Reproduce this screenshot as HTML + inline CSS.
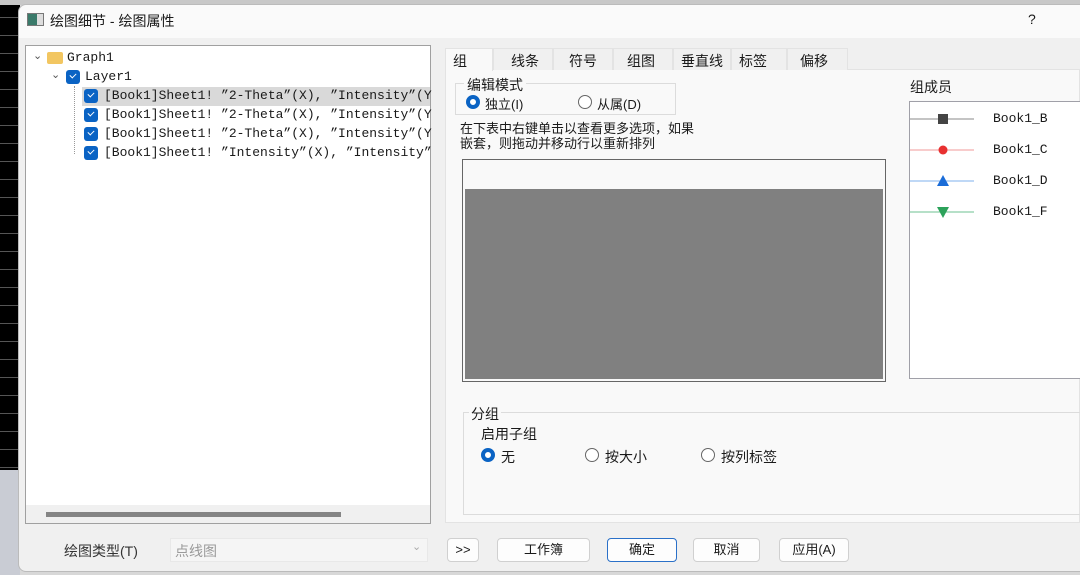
<!DOCTYPE html>
<html><head><meta charset="utf-8"><style>
*{margin:0;padding:0;box-sizing:border-box}
body{width:1080px;height:575px;overflow:hidden;position:relative;background:#d8d8d8;font-family:"Liberation Sans","Noto Sans CJK SC",sans-serif;font-size:13px;color:#1a1a1a}
.a{position:absolute}
.mono{font-family:"Liberation Mono","Noto Sans CJK SC",monospace;font-size:13px;white-space:nowrap}
.cb{position:absolute;width:14px;height:14px;border-radius:3px;background:#0a63c4}
.cb:after{content:"";position:absolute;left:4px;top:3px;width:5px;height:3px;border-left:1.5px solid #fff;border-bottom:1.5px solid #fff;transform:rotate(-45deg)}
.tab{position:absolute;top:48px;height:22px;background:#f0f0f0;border:1px solid #e3e3e3;border-bottom:none;padding:2px 0 0 7px;font-size:14px}
.rad{position:absolute;width:14px;height:14px;border-radius:50%;border:1px solid #666;background:#fff}
.rad.on{border:4px solid #0a63c4}
.btn{position:absolute;top:538px;height:24px;background:#fdfdfd;border:1px solid #d0d0d0;border-radius:4px;text-align:center;line-height:22px;font-size:13px}
.t{white-space:nowrap}
</style></head><body>
<div class="a" style="left:0;top:0;width:20px;height:470px;background:#000;background-image:repeating-linear-gradient(#000 0 17px,#555 17px 18px)"></div>
<div class="a" style="left:0;top:0;width:1080px;height:5px;background:#c8c8c8"></div>
<div class="a" style="left:0;top:470px;width:20px;height:105px;background:#c9ccd4"></div>
<div class="a" style="left:18px;top:4px;width:1070px;height:568px;background:#f0f0f0;border-radius:8px;border:1px solid #bbb"></div>
<div class="a" style="left:19px;top:5px;width:1061px;height:33px;background:#fafafa;border-radius:8px 0 0 0"></div>
<div class="a" style="left:27px;top:13px;width:17px;height:13px;border:1px solid #777;background:linear-gradient(90deg,#3a7a6a 0 60%,#ddd 60%)"></div>
<div class="a t" style="left:50px;top:11px;font-size:14px">绘图细节 - 绘图属性</div>
<div class="a t" style="left:1028px;top:11px;font-size:14px">?</div>
<div class="a" style="left:25px;top:45px;width:406px;height:479px;background:#fff;border:1px solid #a0a0a0"></div>
<div class="a" style="left:26px;top:505px;width:404px;height:18px;background:#f0f0f0"></div>
<div class="a" style="left:46px;top:512px;width:295px;height:5px;background:#858585"></div>
<div class="a t" style="left:33px;top:49px;font-size:11px;color:#555">⌄</div>
<div class="a" style="left:47px;top:52px;width:16px;height:12px;background:#f2c661;border-radius:2px"></div>
<div class="a mono" style="left:67px;top:50px">Graph1</div>
<div class="a t" style="left:51px;top:68px;font-size:11px;color:#555">⌄</div>
<div class="cb" style="left:66px;top:70px"></div>
<div class="a mono" style="left:85px;top:69px">Layer1</div>
<div class="a" style="left:74px;top:86px;width:1px;height:68px;border-left:1px dotted #999"></div>
<div class="a" style="left:82px;top:87px;width:348px;height:19px;background:#d9d9d9"></div>
<div class="cb" style="left:84px;top:89px"></div>
<div class="a mono" style="left:104px;top:88px">[Book1]Sheet1! ”2-Theta”(X), ”Intensity”(Y</div>
<div class="cb" style="left:84px;top:108px"></div>
<div class="a mono" style="left:104px;top:107px">[Book1]Sheet1! ”2-Theta”(X), ”Intensity”(Y</div>
<div class="cb" style="left:84px;top:127px"></div>
<div class="a mono" style="left:104px;top:126px">[Book1]Sheet1! ”2-Theta”(X), ”Intensity”(Y</div>
<div class="cb" style="left:84px;top:146px"></div>
<div class="a mono" style="left:104px;top:145px">[Book1]Sheet1! ”Intensity”(X), ”Intensity”</div>
<div class="a" style="left:445px;top:69px;width:635px;height:454px;background:#f9f9f9;border:1px solid #e3e3e3"></div>
<div class="tab" style="left:445px;width:48px;height:23px;background:#f9f9f9">组</div>
<div class="tab" style="left:493px;width:60px;padding-left:17px">线条</div>
<div class="tab" style="left:553px;width:60px;padding-left:15px">符号</div>
<div class="tab" style="left:613px;width:60px;padding-left:13px">组图</div>
<div class="tab" style="left:673px;width:58px">垂直线</div>
<div class="tab" style="left:731px;width:56px">标签</div>
<div class="tab" style="left:787px;width:61px;padding-left:12px">偏移</div>
<div class="a" style="left:455px;top:83px;width:221px;height:32px;border:1px solid #dcdcdc"></div>
<div class="a t" style="left:464px;top:75px;background:#f9f9f9;padding:0 3px;font-size:14px">编辑模式</div>
<div class="rad on" style="left:466px;top:95px"></div>
<div class="a t" style="left:485px;top:94px">独立(I)</div>
<div class="rad" style="left:578px;top:95px"></div>
<div class="a t" style="left:597px;top:94px">从属(D)</div>
<div class="a t" style="left:460px;top:121px;line-height:15px">在下表中右键单击以查看更多选项，如果<br>嵌套，则拖动并移动行以重新排列</div>
<div class="a" style="left:462px;top:159px;width:424px;height:223px;border:1px solid #666;background:#f9f9f9"></div>
<div class="a" style="left:465px;top:189px;width:418px;height:190px;background:#808080"></div>
<div class="a t" style="left:910px;top:77px;font-size:14px">组成员</div>
<div class="a" style="left:909px;top:101px;width:175px;height:278px;background:#fff;border:1px solid #a0a0a8"></div>
<svg class="a" style="left:910px;top:105px" width="70" height="120">
<line x1="0" y1="14" x2="64" y2="14" stroke="#888"/><rect x="28" y="9" width="10" height="10" fill="#444"/>
<line x1="0" y1="45" x2="64" y2="45" stroke="#f29a9a"/><circle cx="33" cy="45" r="4.5" fill="#e83030"/>
<line x1="0" y1="76" x2="64" y2="76" stroke="#7fb0ee"/><polygon points="27,81 39,81 33,70" fill="#1a6cd8"/>
<line x1="0" y1="107" x2="64" y2="107" stroke="#6cc090"/><polygon points="27,102 39,102 33,113" fill="#2ca25a"/>
</svg>
<div class="a mono" style="left:993px;top:111px">Book1_B</div>
<div class="a mono" style="left:993px;top:142px">Book1_C</div>
<div class="a mono" style="left:993px;top:173px">Book1_D</div>
<div class="a mono" style="left:993px;top:204px">Book1_F</div>
<div class="a" style="left:463px;top:412px;width:620px;height:103px;border:1px solid #dcdcdc"></div>
<div class="a t" style="left:469px;top:404px;background:#f9f9f9;padding:0 2px;font-size:14px">分组</div>
<div class="a t" style="left:481px;top:424px;font-size:14px">启用子组</div>
<div class="rad on" style="left:481px;top:448px"></div>
<div class="a t" style="left:501px;top:447px;font-size:14px">无</div>
<div class="rad" style="left:585px;top:448px"></div>
<div class="a t" style="left:605px;top:447px;font-size:14px">按大小</div>
<div class="rad" style="left:701px;top:448px"></div>
<div class="a t" style="left:721px;top:447px;font-size:14px">按列标签</div>
<div class="a t" style="left:64px;top:541px;font-size:14px;color:#333">绘图类型(T)</div>
<div class="a" style="left:170px;top:538px;width:258px;height:24px;background:#f5f5f5;border:1px solid #e8e8e8"></div>
<div class="a t" style="left:175px;top:541px;font-size:14px;color:#9a9a9a">点线图</div>
<div class="a t" style="left:412px;top:540px;font-size:11px;color:#aaa">⌄</div>
<div class="btn" style="left:447px;width:32px">&gt;&gt;</div>
<div class="btn" style="left:497px;width:93px">工作簿</div>
<div class="btn" style="left:607px;width:70px;border-color:#2a70c8">确定</div>
<div class="btn" style="left:693px;width:67px">取消</div>
<div class="btn" style="left:779px;width:70px">应用(A)</div>
</body></html>
